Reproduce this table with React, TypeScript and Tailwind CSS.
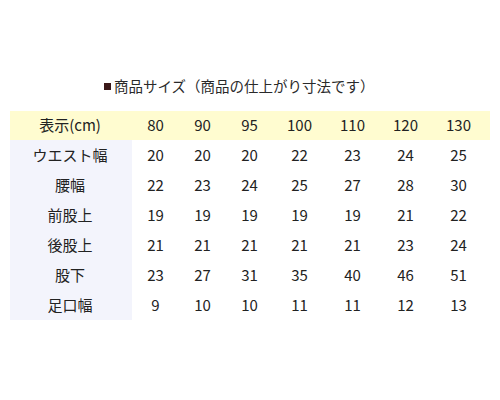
// Size chart for kids' pants
const sizes = ['80', '90', '95', '100', '110', '120', '130'];

const rows: { label: string; values: number[] }[] = [
  { label: 'ウエスト幅', values: [20, 20, 20, 22, 23, 24, 25] },
  { label: '腰幅', values: [22, 23, 24, 25, 27, 28, 30] },
  { label: '前股上', values: [19, 19, 19, 19, 19, 21, 22] },
  { label: '後股上', values: [21, 21, 21, 21, 21, 23, 24] },
  { label: '股下', values: [23, 27, 31, 35, 40, 46, 51] },
  { label: '足口幅', values: [9, 10, 10, 11, 11, 12, 13] },
];

const font = { fontFamily: '"Noto Sans CJK JP", "Noto Sans", sans-serif' };

export default function App() {
  return (
    <div className="w-[500px] h-[400px] bg-white text-[#222] overflow-hidden" style={font}>
      {/* Title */}
      <div className="pt-[74px] pl-[100px] h-[111px] text-[14.5px] leading-[24px] text-[#2a2a2a] flex items-start">
        <span className="flex items-center h-[24px]">
          <span className="inline-block w-[7px] h-[7px] bg-[#3b1818] ml-[4px] mr-[3px] mt-[1px]" />
        </span>
        <span>商品サイズ（商品の仕上がり寸法です）</span>
      </div>

      {/* Table */}
      <div className="ml-[10px] w-[480px] grid grid-cols-[122px_47px_47px_47px_53px_53px_53px_58px] text-[15px]">
        <div className="h-[29px] bg-[#fffcd0] flex items-center justify-center pr-[2px]">表示(cm)</div>
        {sizes.map((s, i) => (
          <div key={s} className={`h-[29px] bg-[#fffcd0] flex items-center justify-center ${i === 6 ? 'pr-[5px]' : ''}`}>
            {s}
          </div>
        ))}

        {rows.map((r) => (
          <div key={r.label} className="contents">
            <div className="h-[30px] bg-[#f3f4fc] flex items-center justify-center pr-[2px]">{r.label}</div>
            {r.values.map((v, i) => (
              <div key={i} className={`h-[30px] flex items-center justify-center ${i === 6 ? 'pr-[5px]' : ''}`}>
                {v}
              </div>
            ))}
          </div>
        ))}
      </div>
    </div>
  );
}
